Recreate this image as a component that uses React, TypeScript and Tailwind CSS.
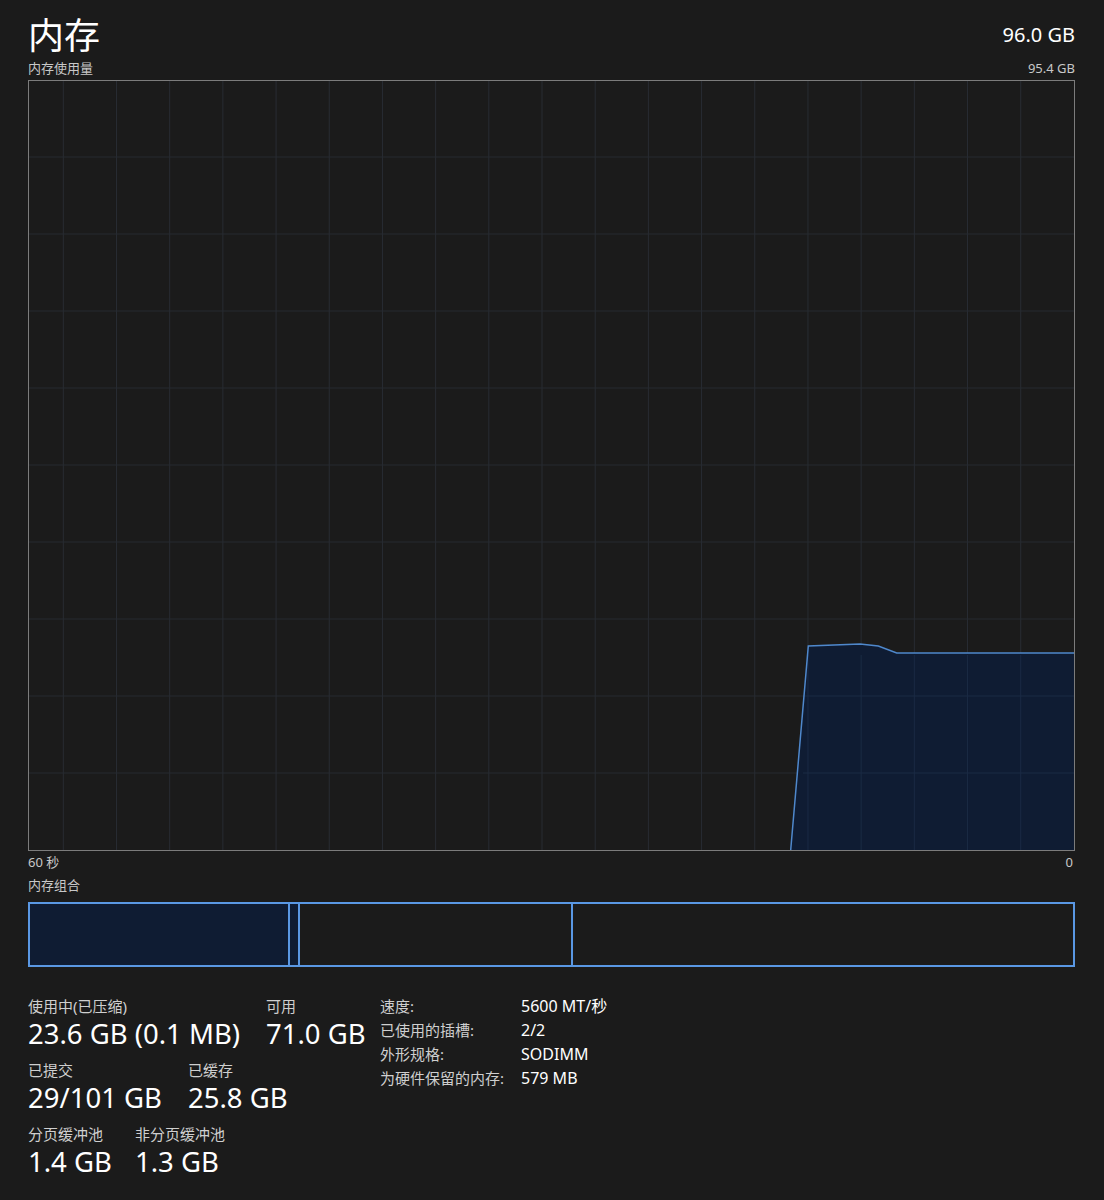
import React from "react";

const W = 1047;
const H = 771;

function Graph() {
  const vlines: number[] = [];
  for (let k = 0; k < 19; k++) vlines.push(35.3 + 53.19 * k);
  const hlines: number[] = [];
  for (let k = 1; k < 10; k++) hlines.push(77 * k);
  const pts: [number, number][] = [
    [762.7, 770],
    [780.3, 566],
    [832, 564],
    [850.3, 566],
    [868.7, 573],
    [1046, 573],
  ];
  const area = pts.map((p) => p.join(",")).join(" ") + ` 1046,770`;
  const line = pts.map((p) => p.join(",")).join(" ");
  return (
    <svg width={W} height={H} viewBox={`0 0 ${W} ${H}`} className="block">
      <rect x="0" y="0" width={W} height={H} fill="#1b1b1b" />
      {vlines.map((x, i) => (
        <line key={"v" + i} x1={x} y1={1} x2={x} y2={H - 1} stroke="#282c33" strokeWidth="1" />
      ))}
      {hlines.map((y, i) => (
        <line key={"h" + i} x1={1} y1={y} x2={W - 1} y2={y} stroke="#272a30" strokeWidth="1" />
      ))}
      <polygon points={area} fill="#0f1c33" />
      {vlines
        .filter((x) => x > 770)
        .map((x, i) => (
          <line key={"vf" + i} x1={x} y1={575} x2={x} y2={H - 1} stroke="#1a2a44" strokeWidth="1" />
        ))}
      {hlines
        .filter((y) => y > 575)
        .map((y, i) => (
          <line key={"hf" + i} x1={775} y1={y} x2={W - 1} y2={y} stroke="#1a2a44" strokeWidth="1" />
        ))}
      <polyline points={line} fill="none" stroke="#4f88cc" strokeWidth="1.5" />
      <rect x="0.5" y="0.5" width={W - 1} height={H - 1} fill="none" stroke="#7c7c7c" strokeWidth="1" />
    </svg>
  );
}

function Stat({ label, value, w }: { label: string; value: string; w: string }) {
  return (
    <div className={`flex flex-col ${w}`}>
      <div className="text-[15px] leading-[20px] text-[#cfcfcf]">{label}</div>
      <div className="text-[27.5px] leading-[36px] text-white">{value}</div>
    </div>
  );
}

export default function App() {
  return (
    <div
      className="w-[1104px] h-[1200px] bg-[#1b1b1b] pl-[28px] pr-[29px] text-white"
      style={{ fontFamily: '"Noto Sans", "Noto Sans CJK SC", sans-serif' }}
    >
      <div className="flex justify-between items-end pt-[6px] h-[56px]">
        <div className="text-[36px] leading-[46px]" style={{ fontFamily: '"Noto Sans CJK SC", sans-serif' }}>
          内存
        </div>
        <div className="text-[20px] leading-[28px] pb-[7px]">96.0 GB</div>
      </div>
      <div className="flex justify-between h-[24px] items-center text-[13px] leading-[18px] text-[#c8c8c8] pb-[1px]">
        <span>内存使用量</span>
        <span>95.4 GB</span>
      </div>
      <Graph />
      <div className="flex justify-between text-[13px] leading-[22px] text-[#c8c8c8]">
        <span>60 秒</span>
        <span className="pr-[2px]">0</span>
      </div>
      <div className="text-[13px] leading-[18px] text-[#c8c8c8] pt-[3px]">内存组合</div>
      <div className="mt-[8px] flex h-[65px] border-2 border-[#5a98e4]">
        <div className="w-[260px] bg-[#0f1c33] border-r-2 border-[#5a98e4]"></div>
        <div className="w-[10px] bg-[#0f1c33] border-r-2 border-[#5a98e4]"></div>
        <div className="w-[273px] border-r-2 border-[#5a98e4]"></div>
        <div className="flex-1"></div>
      </div>
      <div className="flex mt-[29px]">
        <div className="flex flex-col gap-[8px] w-[352px]">
          <div className="flex">
            <Stat label="使用中(已压缩)" value="23.6 GB (0.1 MB)" w="w-[238px]" />
            <Stat label="可用" value="71.0 GB" w="w-[110px]" />
          </div>
          <div className="flex">
            <Stat label="已提交" value="29/101 GB" w="w-[160px]" />
            <Stat label="已缓存" value="25.8 GB" w="w-[120px]" />
          </div>
          <div className="flex">
            <Stat label="分页缓冲池" value="1.4 GB" w="w-[107px]" />
            <Stat label="非分页缓冲池" value="1.3 GB" w="w-[120px]" />
          </div>
        </div>
        <div className="flex flex-col text-[15px] leading-[24px] text-[#cfcfcf] -mt-[2px]">
          {[
            ["速度:", "5600 MT/秒"],
            ["已使用的插槽:", "2/2"],
            ["外形规格:", "SODIMM"],
            ["为硬件保留的内存:", "579 MB"],
          ].map(([k, v]) => (
            <div key={k} className="flex">
              <span className="w-[141px]">{k}</span>
              <span className="text-white text-[16px]">{v}</span>
            </div>
          ))}
        </div>
      </div>
    </div>
  );
}
